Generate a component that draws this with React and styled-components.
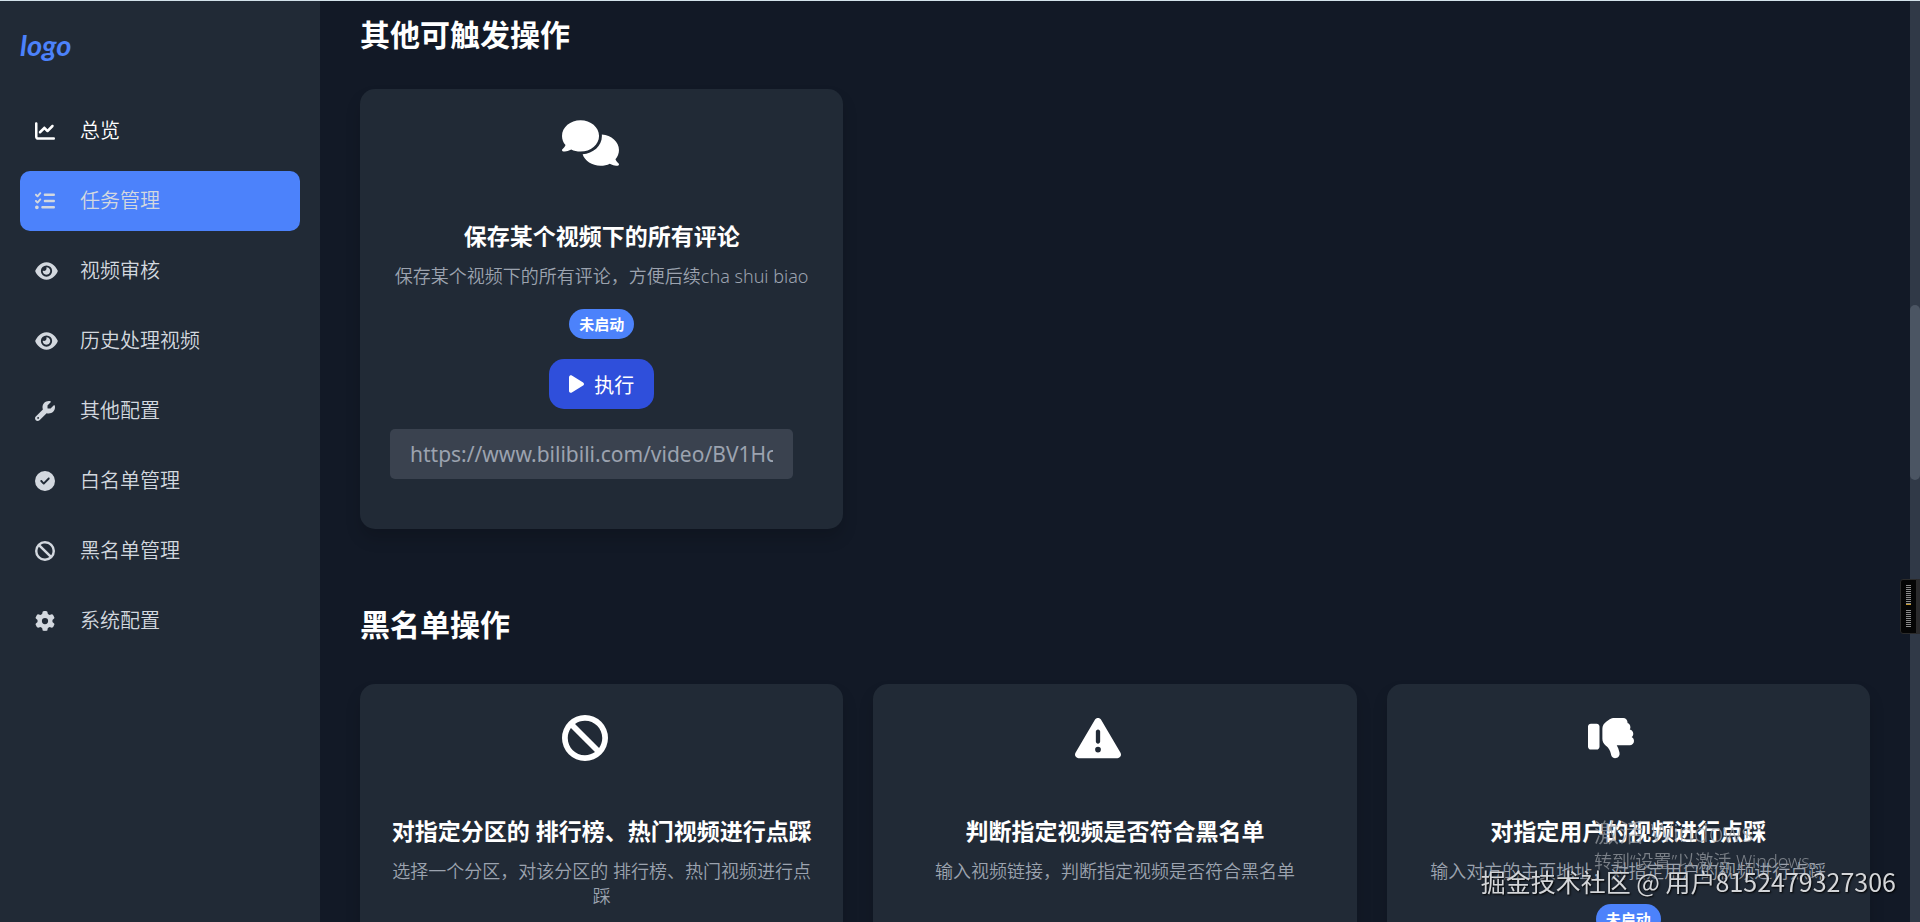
import React from 'react';
import styled, { createGlobalStyle } from 'styled-components';
import {
  FaChartLine,
  FaListCheck,
  FaEye,
  FaWrench,
  FaCircleCheck,
  FaBan,
  FaGear,
  FaComments,
  FaTriangleExclamation,
  FaThumbsDown,
  FaPlay,
} from 'react-icons/fa6';

const color = {
  page: '#121926',
  panel: '#212a36',
  accent: '#4c82fb',
  button: '#2f4fdb',
  field: '#3a424f',
  text: '#ffffff',
  soft: '#d3d8df',
  muted: '#9ca3af',
};

const GlobalStyle = createGlobalStyle`
  *, *::before, *::after { box-sizing: border-box; }
  body {
    margin: 0;
    overflow: hidden;
    background: ${color.page};
    color: ${color.text};
    font-family: "Noto Sans", "Noto Sans CJK SC", sans-serif;
    font-size: 20px;
  }
  h2, h3, p, ul { margin: 0; padding: 0; }
`;

const Page = styled.div`
  display: flex;
  height: 100vh;
  overflow: hidden;
  border-top: 1px solid #d3e2ea;
`;

const Sidebar = styled.aside`
  flex: 0 0 320px;
  padding: 20px;
  background: ${color.panel};
`;

const Logo = styled.a`
  display: block;
  margin-bottom: 32px;
  color: ${color.accent};
  font-family: Lato, sans-serif;
  font-size: 29px;
  font-style: italic;
  font-weight: 700;
  line-height: 48px;
  text-decoration: none;
`;

const NavList = styled.ul`
  display: grid;
  gap: 10px;
  list-style: none;
`;

const NavLink = styled.a`
  display: grid;
  grid-template-columns: 45px 1fr;
  align-items: center;
  height: 60px;
  padding: 0 15px;
  border-radius: 10px;
  background: ${({ $active }) => ($active ? color.accent : 'transparent')};
  color: ${({ $bright }) => ($bright ? color.text : color.soft)};
  font-weight: 350;
  line-height: 30px;
  text-decoration: none;

  svg {
    width: ${({ $wide }) => ($wide ? 23 : 20)}px;
    height: 20px;
  }
`;

const Main = styled.main`
  flex: 1;
  min-width: 0;
  padding: 14px 40px 0;
  overflow: hidden;
`;

const Section = styled.section`
  margin-bottom: 76px;
`;

const SectionTitle = styled.h2`
  margin-bottom: ${({ $gap }) => $gap}px;
  font-size: 30px;
  font-weight: 700;
  line-height: 40px;
`;

const CardGrid = styled.div`
  display: grid;
  grid-template-columns: repeat(3, minmax(0, 1fr));
  gap: 30px;
`;

const CardBox = styled.article`
  display: flex;
  flex-direction: column;
  align-items: center;
  gap: 20px;
  padding: 30px;
  border-radius: 15px;
  background: ${color.panel};
  box-shadow: 0 10px 15px rgba(0, 0, 0, 0.15);
`;

const CardHead = styled.header`
  display: flex;
  flex-direction: column;
  align-items: center;
  width: 100%;
  text-align: center;
`;

const CardIcon = styled.div`
  width: 80px;
  height: 80px;
  margin-bottom: 20px;
  padding-top: 1px;

  svg {
    display: block;
    width: ${({ $wide }) => ($wide ? 57 : 46)}px;
    height: 46px;
  }
`;

const CardTitle = styled.h3`
  margin-bottom: 10px;
  font-size: 23px;
  font-weight: 700;
  line-height: 35px;
`;

const CardText = styled.p`
  color: ${color.muted};
  font-size: 18px;
  font-weight: 350;
  line-height: 25px;
`;

const Badge = styled.span`
  padding: 0 10px;
  border-radius: 15px;
  background: ${color.accent};
  font-size: 15px;
  font-weight: 700;
  line-height: 30px;
`;

const CardForm = styled.form`
  display: flex;
  flex-direction: column;
  align-items: center;
  gap: 20px;
  width: 100%;
  margin-top: auto;
  padding-bottom: 20px;
`;

const RunButton = styled.button`
  display: flex;
  align-items: center;
  gap: 10px;
  height: 50px;
  padding: 0 20px;
  border: 0;
  border-radius: 15px;
  background: ${color.button};
  color: ${color.text};
  font: inherit;

  svg {
    width: 15px;
    height: 20px;
  }
`;

const UrlInput = styled.input`
  align-self: flex-start;
  width: calc(100% - 20px);
  height: 50px;
  padding: 0 20px;
  border: 0;
  border-radius: 5px;
  background: ${color.field};
  color: ${color.text};
  font: inherit;
  font-size: 21px;

  &::placeholder {
    color: ${color.muted};
    opacity: 1;
  }
`;

const ScrollTrack = styled.div`
  position: relative;
  flex: 0 0 10px;
  background: #303947;
`;

const ScrollThumb = styled.div`
  position: absolute;
  top: 33%;
  width: 100%;
  height: 19%;
  border-radius: 5px;
  background: #4b5563;
`;

const Meter = styled.div`
  position: fixed;
  top: 579px;
  right: 3px;
  display: flex;
  flex-direction: column;
  align-items: center;
  justify-content: center;
  gap: 5px;
  width: 17px;
  height: 55px;
  border: 1px solid #2b2b2b;
  border-radius: 3px 0 0 3px;
  background: #050505;
  box-shadow: 3px 0 0 #2a2a2c;
`;

const MeterBars = styled.div`
  width: 5px;
  height: ${({ $height }) => $height}px;
  border-bottom: ${({ $marked }) => ($marked ? '1px solid #c79a2e' : '0')};
  background: repeating-linear-gradient(#8a8a8a 0 1px, transparent 1px 2px);
`;

const SystemNotice = styled.div`
  position: fixed;
  right: 92px;
  bottom: 48px;
  width: 234px;
  color: rgba(160, 164, 170, 0.7);
  font-weight: 350;
  pointer-events: none;
`;

const NoticeTitle = styled.p`
  font-size: 25px;
  line-height: 34px;
  white-space: nowrap;
`;

const NoticeText = styled.p`
  font-size: 18px;
  line-height: 25px;
  white-space: nowrap;
`;

const Credit = styled.p`
  position: fixed;
  right: 24px;
  bottom: 24px;
  color: #d4d6d9;
  font-family: "Noto Sans CJK SC", sans-serif;
  font-size: 25px;
  line-height: 34px;
  text-shadow: 1px 1px 2px #000;
  white-space: nowrap;
  pointer-events: none;
`;

const navItems = [
  { label: '总览', icon: FaChartLine, bright: true },
  { label: '任务管理', icon: FaListCheck, active: true },
  { label: '视频审核', icon: FaEye, wide: true },
  { label: '历史处理视频', icon: FaEye, wide: true },
  { label: '其他配置', icon: FaWrench },
  { label: '白名单管理', icon: FaCircleCheck },
  { label: '黑名单管理', icon: FaBan },
  { label: '系统配置', icon: FaGear },
];

const sections = [
  {
    title: '其他可触发操作',
    gap: 34,
    cards: [
      {
        icon: FaComments,
        wide: true,
        title: '保存某个视频下的所有评论',
        text: '保存某个视频下的所有评论，方便后续cha shui biao',
        status: '未启动',
      },
    ],
  },
  {
    title: '黑名单操作',
    gap: 39,
    cards: [
      {
        icon: FaBan,
        title: '对指定分区的 排行榜、热门视频进行点踩',
        text: '选择一个分区，对该分区的 排行榜、热门视频进行点踩',
      },
      {
        icon: FaTriangleExclamation,
        title: '判断指定视频是否符合黑名单',
        text: '输入视频链接，判断指定视频是否符合黑名单',
      },
      {
        icon: FaThumbsDown,
        title: '对指定用户的视频进行点踩',
        text: '输入对方的主页地址，对指定用户的视频进行点踩',
        status: '未启动',
      },
    ],
  },
];

function Card({ icon: Icon, wide, title, text, status }) {
  return (
    <CardBox>
      <CardHead>
        <CardIcon $wide={wide}>
          <Icon />
        </CardIcon>
        <CardTitle>{title}</CardTitle>
        <CardText>{text}</CardText>
      </CardHead>
      {status && <Badge>{status}</Badge>}
      <CardForm>
        <RunButton type="button">
          <FaPlay />
          执行
        </RunButton>
        <UrlInput
          type="text"
          aria-label={title}
          placeholder="https://www.bilibili.com/video/BV1HctVe8Eyh"
        />
      </CardForm>
    </CardBox>
  );
}

export default function App() {
  return (
    <>
      <GlobalStyle />
      <Page>
        <Sidebar>
          <Logo href="#">logo</Logo>
          <nav>
            <NavList>
              {navItems.map(({ label, icon: Icon, active, bright, wide }) => (
                <li key={label}>
                  <NavLink href="#" $active={active} $bright={bright} $wide={wide}>
                    <Icon />
                    <span>{label}</span>
                  </NavLink>
                </li>
              ))}
            </NavList>
          </nav>
        </Sidebar>
        <Main>
          {sections.map(({ title, gap, cards }) => (
            <Section key={title}>
              <SectionTitle $gap={gap}>{title}</SectionTitle>
              <CardGrid>
                {cards.map((card) => (
                  <Card key={card.title} {...card} />
                ))}
              </CardGrid>
            </Section>
          ))}
        </Main>
        <ScrollTrack>
          <ScrollThumb />
        </ScrollTrack>
      </Page>
      <Meter>
        <MeterBars $height={20} $marked />
        <MeterBars $height={18} />
      </Meter>
      <SystemNotice>
        <NoticeTitle>激活 Windows</NoticeTitle>
        <NoticeText>转到“设置”以激活 Windows。</NoticeText>
      </SystemNotice>
      <Credit>掘金技术社区 @ 用户8152479327306</Credit>
    </>
  );
}
